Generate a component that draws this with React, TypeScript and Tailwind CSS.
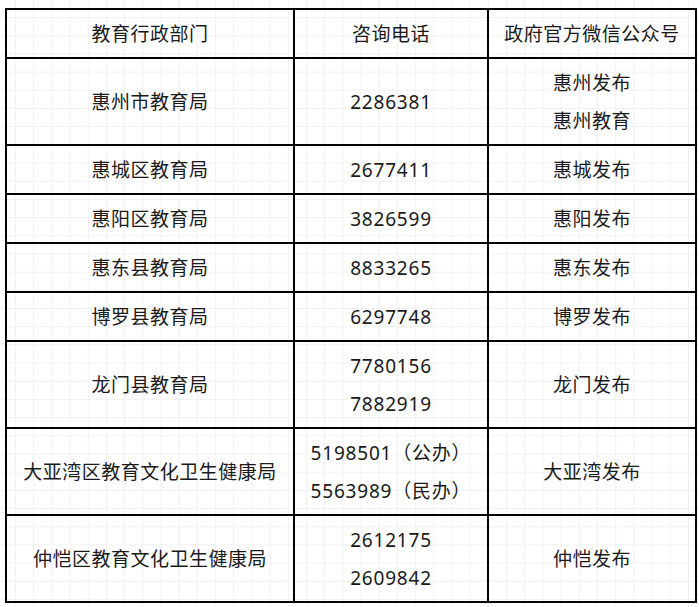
const rows: { name: string; phones: string[]; accounts: string[] }[] = [
  { name: "惠州市教育局", phones: ["2286381"], accounts: ["惠州发布", "惠州教育"] },
  { name: "惠城区教育局", phones: ["2677411"], accounts: ["惠城发布"] },
  { name: "惠阳区教育局", phones: ["3826599"], accounts: ["惠阳发布"] },
  { name: "惠东县教育局", phones: ["8833265"], accounts: ["惠东发布"] },
  { name: "博罗县教育局", phones: ["6297748"], accounts: ["博罗发布"] },
  { name: "龙门县教育局", phones: ["7780156", "7882919"], accounts: ["龙门发布"] },
  {
    name: "大亚湾区教育文化卫生健康局",
    phones: ["5198501（公办）", "5563989（民办）"],
    accounts: ["大亚湾发布"],
  },
  { name: "仲恺区教育文化卫生健康局", phones: ["2612175", "2609842"], accounts: ["仲恺发布"] },
];

const cell = "border-2 border-black text-center align-middle py-[4.5px] px-1 leading-[38px]";

const App = () => {
  return (
    <div className="w-[699px] h-[607px] bg-white bg-[linear-gradient(to_right,#f1f1f1_1px,transparent_1px),linear-gradient(to_bottom,#f1f1f1_1px,transparent_1px)] bg-[size:18.2px_18.2px] bg-[position:15px_17px] pt-[8px] pl-[5px] font-['Noto_Sans','Noto_Sans_CJK_SC',sans-serif] text-[19px] tracking-[0.5px] text-[#1a1a1a]">
      <table className="table-fixed border-collapse w-[690px]">
        <colgroup>
          <col className="w-[288px]" />
          <col className="w-[194px]" />
          <col className="w-[208px]" />
        </colgroup>
        <thead>
          <tr>
            <th className={`${cell} font-normal`}>教育行政部门</th>
            <th className={`${cell} font-normal`}>咨询电话</th>
            <th className={`${cell} font-normal`}>政府官方微信公众号</th>
          </tr>
        </thead>
        <tbody>
          {rows.map((r) => (
            <tr key={r.name}>
              <td className={cell}>{r.name}</td>
              <td className={`${cell} tracking-[0.8px]`}>
                {r.phones.map((p) => (
                  <div key={p}>{p}</div>
                ))}
              </td>
              <td className={cell}>
                {r.accounts.map((a) => (
                  <div key={a}>{a}</div>
                ))}
              </td>
            </tr>
          ))}
        </tbody>
      </table>
    </div>
  );
};

export default App;
